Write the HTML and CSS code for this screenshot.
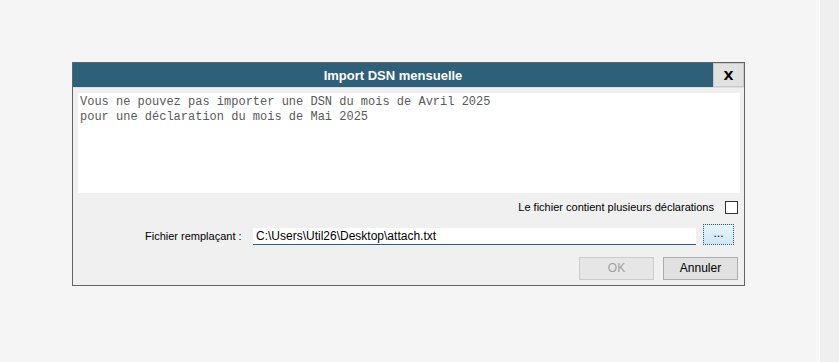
FILE: index.html
```html
<!DOCTYPE html>
<html lang="fr">
<head>
<meta charset="utf-8">
<title>Import DSN mensuelle</title>
<link rel="stylesheet" href="styles.css">
</head>
<body>
<div class="page">
  <main class="stage">
    <section class="dialog">
      <header class="titlebar">
        <span class="title">Import DSN mensuelle</span>
        <button class="close">X</button>
      </header>
      <div class="body">
        <div class="message">Vous ne pouvez pas importer une DSN du mois de Avril 2025
pour une déclaration du mois de Mai 2025</div>
        <div class="row-check">
          <span class="label">Le fichier contient plusieurs déclarations</span>
          <span class="checkbox"></span>
        </div>
        <div class="row-file">
          <span class="label file-label">Fichier remplaçant :</span>
          <span class="input">C:\Users\Util26\Desktop\attach.txt</span>
          <span class="browse">...</span>
        </div>
        <div class="row-buttons">
          <span class="btn disabled">OK</span>
          <span class="btn">Annuler</span>
        </div>
      </div>
    </section>
  </main>
  <div class="edge"></div>
  <div class="gap"></div>
  <div class="rail"></div>
</div>
</body>
</html>
```
FILE: styles.css
```css
html, body {
  margin: 0;
  padding: 0;
  height: 100%;
}
body {
  background: #f5f5f5;
  font-family: "Liberation Sans", Arial, sans-serif;
}
.page {
  display: flex;
  height: 362px;
}
.stage {
  flex: 1;
  padding: 62px 0 0 72px;
  background: #f5f5f5;
}
.edge { width: 3px; background: #f7f7f7; }
.gap { width: 1px; background: #ffffff; }
.rail { width: 19px; background: #efefef; }

.dialog {
  width: 671px;
  height: 222px;
  border: 1px solid #646464;
  background: #f0f0f0;
  display: flex;
  flex-direction: column;
}
.titlebar {
  height: 24px;
  background: #2e6179;
  display: flex;
  align-items: center;
  border-bottom: 1px solid #d9dfe3;
}
.title {
  flex: 1;
  text-align: center;
  color: #ffffff;
  font-family: "Liberation Sans", Arial, sans-serif;
  font-weight: bold;
  font-size: 13px;
}
.close {
  align-self: stretch;
  width: 31px;
  margin: 0;
  padding: 0;
  border: 1px solid #c9c9c9;
  background: #e1e1e1;
  font-family: "DejaVu Sans", sans-serif;
  font-weight: bold;
  font-size: 13px;
  color: #000;
}
.body {
  flex: 1;
  padding: 5px 4px 0 5px;
  display: flex;
  flex-direction: column;
}
.message {
  height: 98px;
  background: #ffffff;
  padding: 2px 0 0 2px;
  font-family: "Liberation Mono", monospace;
  font-size: 12px;
  line-height: 15px;
  color: #5a5a5a;
  white-space: pre;
}
.label {
  font-size: 11px;
  color: #000;
}
.row-check {
  display: flex;
  justify-content: flex-end;
  align-items: center;
  gap: 11px;
  margin-top: 6px;
  height: 16px;
  padding-right: 2px;
}
.checkbox {
  width: 11px;
  height: 11px;
  border: 1px solid #333333;
  background: #ffffff;
}
.row-file {
  display: flex;
  align-items: flex-end;
  margin-top: 9px;
  height: 21px;
}
.file-label {
  margin-left: 67px;
  width: 108px;
  line-height: 17px;
}
.input {
  width: 440px;
  height: 16px;
  background: #ffffff;
  border-bottom: 1px solid #2b5d7a;
  font-size: 12px;
  line-height: 17px;
  padding-left: 3px;
}
.browse {
  margin-left: 7px;
  width: 29px;
  height: 19px;
  border: 1px dotted #2a5a8a;
  background: linear-gradient(#e9f4fc, #cfe6f8);
  text-align: center;
  font-size: 12px;
  line-height: 17px;
}
.row-buttons {
  display: flex;
  justify-content: flex-end;
  gap: 9px;
  margin-top: 12px;
  padding-right: 2px;
}
.btn {
  width: 73px;
  height: 21px;
  border: 1px solid #adadad;
  background: #e1e1e1;
  font-size: 12px;
  line-height: 21px;
  text-align: center;
  color: #000;
}
.btn.disabled {
  color: #a0a0a0;
  border-color: #cccccc;
  background: #e6e6e6;
}
```
